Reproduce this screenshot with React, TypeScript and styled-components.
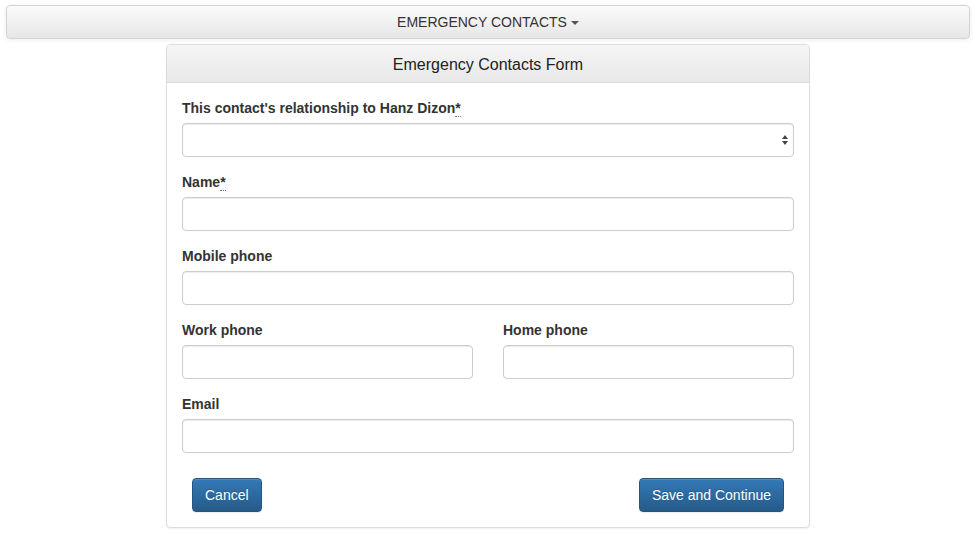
import React from "react";
import styled, { createGlobalStyle } from "styled-components";

const GlobalStyle = createGlobalStyle`
    html, body {
        margin: 0;
        background: #fff;
    }
    body {
        padding: 5px 6px;
        font-family: "Liberation Sans", Arial, sans-serif;
        font-size: 14px;
        line-height: 1.42857;
        color: #333;
    }
    * {
        box-sizing: border-box;
    }
`;

const Navbar = styled.nav`
    height: 34px;
    padding-top: 1px;
    border: 1px solid #d3d3d3;
    border-radius: 4px;
    background-image: linear-gradient(to bottom, #fbfbfb 0%, #e6e6e6 100%);
    box-shadow: inset 0 1px 0 rgba(255, 255, 255, 0.15), 0 1px 5px rgba(0, 0, 0, 0.075);
    display: flex;
    align-items: center;
    justify-content: center;
`;

const NavToggle = styled.span`
    color: #333;
    font-size: 14px;
    display: flex;
    align-items: center;
    gap: 4px;
`;

const Caret = styled.span`
    display: inline-block;
    width: 0;
    height: 0;
    border-top: 4px solid #555;
    border-left: 4px solid transparent;
    border-right: 4px solid transparent;
    margin-top: 2px;
`;

const Panel = styled.section`
    width: 644px;
    margin: 5px auto 0;
    border: 1px solid #ddd;
    border-radius: 4px;
    box-shadow: 0 1px 2px rgba(0, 0, 0, 0.05);
    background: #fff;
`;

const PanelHeading = styled.header`
    padding: 11px 15px 8px;
    border-bottom: 1px solid #ddd;
    border-radius: 3px 3px 0 0;
    background-image: linear-gradient(to bottom, #f5f5f5 0%, #e8e8e8 100%);
    text-align: center;
    font-size: 16px;
    line-height: 18px;
    color: #222;
`;

const PanelBody = styled.div`
    padding: 15px;
`;

const FormGroup = styled.div`
    margin-bottom: 15px;
`;

const Row = styled.div`
    display: grid;
    grid-template-columns: 1fr 1fr;
    column-gap: 30px;
`;

const Label = styled.label`
    display: block;
    font-weight: bold;
    margin-bottom: 5px;
    line-height: 20px;
`;

const Required = styled.abbr`
    text-decoration: none;
    border-bottom: 1px dotted #777;
    cursor: help;
`;

const Input = styled.input`
    display: block;
    width: 100%;
    height: 34px;
    padding: 6px 12px;
    font-size: 14px;
    font-family: inherit;
    color: #555;
    background: #fff;
    border: 1px solid #ccc;
    border-radius: 4px;
    box-shadow: inset 0 1px 1px rgba(0, 0, 0, 0.075);
    outline: none;
`;

const SelectWrap = styled.div`
    position: relative;
`;

const Select = styled.select`
    display: block;
    width: 100%;
    height: 34px;
    padding: 6px 12px;
    font-size: 14px;
    font-family: inherit;
    color: #555;
    background: #fff;
    border: 1px solid #ccc;
    border-radius: 4px;
    box-shadow: inset 0 1px 1px rgba(0, 0, 0, 0.075);
    appearance: none;
    outline: none;
`;

const SelectArrows = styled.svg`
    position: absolute;
    right: 5px;
    top: 11px;
    pointer-events: none;
`;

const Actions = styled.div`
    display: flex;
    justify-content: space-between;
    padding: 10px 10px 0;
`;

const Button = styled.button`
    height: 34px;
    padding: 6px 12px;
    font-size: 14px;
    font-family: inherit;
    color: #fff;
    text-shadow: 0 -1px 0 rgba(0, 0, 0, 0.2);
    border: 1px solid #245580;
    border-radius: 4px;
    background-image: linear-gradient(to bottom, #337ab7 0%, #265a88 100%);
    box-shadow: inset 0 1px 0 rgba(255, 255, 255, 0.15), 0 1px 1px rgba(0, 0, 0, 0.075);
    cursor: pointer;
`;

const RequiredMark = () => <Required title="required">*</Required>;

export default function App() {
    return (
        <>
            <GlobalStyle />
            <Navbar>
                <NavToggle>
                    EMERGENCY CONTACTS <Caret />
                </NavToggle>
            </Navbar>
            <Panel>
                <PanelHeading>Emergency Contacts Form</PanelHeading>
                <PanelBody>
                    <FormGroup>
                        <Label>This contact's relationship to Hanz Dizon<RequiredMark /></Label>
                        <SelectWrap>
                            <Select defaultValue="">
                                <option value=""></option>
                            </Select>
                            <SelectArrows width="8" height="12" viewBox="0 0 8 12">
                                <path d="M4 1 L7 5 L1 5 Z" fill="#444" />
                                <path d="M4 11 L7 7 L1 7 Z" fill="#444" />
                            </SelectArrows>
                        </SelectWrap>
                    </FormGroup>
                    <FormGroup>
                        <Label>Name<RequiredMark /></Label>
                        <Input type="text" />
                    </FormGroup>
                    <FormGroup>
                        <Label>Mobile phone</Label>
                        <Input type="tel" />
                    </FormGroup>
                    <Row>
                        <FormGroup>
                            <Label>Work phone</Label>
                            <Input type="tel" />
                        </FormGroup>
                        <FormGroup>
                            <Label>Home phone</Label>
                            <Input type="tel" />
                        </FormGroup>
                    </Row>
                    <FormGroup>
                        <Label>Email</Label>
                        <Input type="email" />
                    </FormGroup>
                    <Actions>
                        <Button type="button">Cancel</Button>
                        <Button type="submit">Save and Continue</Button>
                    </Actions>
                </PanelBody>
            </Panel>
        </>
    );
}
